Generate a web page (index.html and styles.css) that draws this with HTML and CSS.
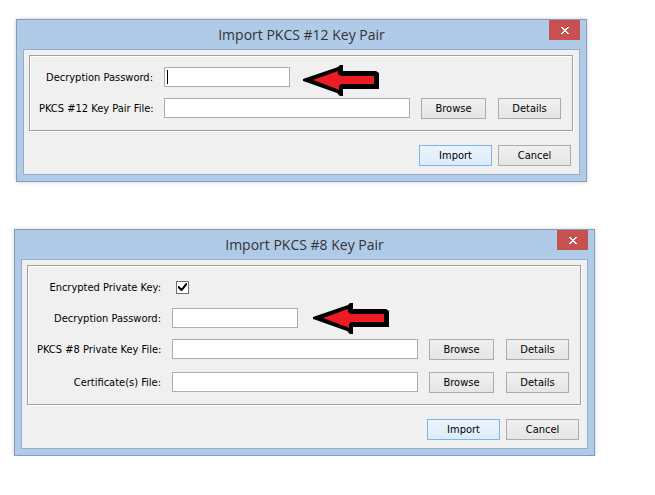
FILE: index.html
```html
<!DOCTYPE html>
<html lang="en">
<head>
<meta charset="utf-8">
<title>Import Key Pair</title>
<link rel="stylesheet" href="styles.css">
</head>
<body>
<svg class="defs" aria-hidden="true">
  <symbol id="arrow" viewBox="0 0 76 31">
    <path class="arrow-line" d="M0 14 L35 2 L37 0 H40 V6 H73 L76 8 V24 H40 V31 H37 L34 28 L3 17 L0 16 Z"/>
    <path class="arrow-fill" d="M10 15 L35 6 V9 L38 11 H71 V19 H38 L36 21 V25 L34 24 Z"/>
  </symbol>
  <symbol id="cross" viewBox="0 0 8 7">
    <path d="M0 0h2v1h1v1h2v-1h1v-1h2v1h-1v1h-1v1h-1v1h1v1h1v1h1v1h-2v-1h-1v-1h-2v1h-1v1h-2v-1h1v-1h1v-1h1v-1h-1v-1h-1v-1h-1z"/>
  </symbol>
</svg>

<form class="dialog dialog-pkcs12">
  <header class="titlebar">
    <h1 class="title">Import PKCS #12 Key Pair</h1>
    <button class="close" type="button" aria-label="Close"><svg class="cross"><use href="#cross"/></svg></button>
  </header>
  <div class="content">
    <div class="panel">
      <div class="row">
        <label class="label" for="p12-password">Decryption Password:</label>
        <div class="field">
          <input class="text password" id="p12-password" type="password">
          <span class="caret"></span>
          <svg class="arrow"><use href="#arrow"/></svg>
        </div>
      </div>
      <div class="row file-row">
        <label class="label" for="p12-file">PKCS #12 Key Pair File:</label>
        <input class="text" id="p12-file" type="text">
        <div class="file-buttons">
          <button class="button browse" type="button">Browse</button>
          <button class="button details" type="button">Details</button>
        </div>
      </div>
    </div>
    <footer class="actions">
      <button class="button action primary" type="button">Import</button>
      <button class="button action" type="button">Cancel</button>
    </footer>
  </div>
</form>

<form class="dialog dialog-pkcs8">
  <header class="titlebar">
    <h1 class="title">Import PKCS #8 Key Pair</h1>
    <button class="close" type="button" aria-label="Close"><svg class="cross"><use href="#cross"/></svg></button>
  </header>
  <div class="content">
    <div class="panel">
      <div class="row">
        <label class="label" for="p8-encrypted">Encrypted Private Key:</label>
        <div class="field"><input class="check" id="p8-encrypted" type="checkbox" checked><svg class="tick" viewBox="0 0 9 9"><path d="M0 3h1l2 2h1l3-4 1-1h1v2L4 8H3L0 5z"/></svg></div>
      </div>
      <div class="row">
        <label class="label" for="p8-password">Decryption Password:</label>
        <div class="field">
          <input class="text password" id="p8-password" type="password">
          <svg class="arrow"><use href="#arrow"/></svg>
        </div>
      </div>
      <div class="row file-row">
        <label class="label" for="p8-file">PKCS #8 Private Key File:</label>
        <input class="text" id="p8-file" type="text">
        <div class="file-buttons">
          <button class="button browse" type="button">Browse</button>
          <button class="button details" type="button">Details</button>
        </div>
      </div>
      <div class="row file-row">
        <label class="label" for="p8-cert">Certificate(s) File:</label>
        <input class="text" id="p8-cert" type="text">
        <div class="file-buttons">
          <button class="button browse" type="button">Browse</button>
          <button class="button details" type="button">Details</button>
        </div>
      </div>
    </div>
    <footer class="actions">
      <button class="button action primary" type="button">Import</button>
      <button class="button action" type="button">Cancel</button>
    </footer>
  </div>
</form>
</body>
</html>
```
FILE: styles.css
```css
* {
  box-sizing: border-box;
}

body {
  margin: 0;
  padding: 19px 60px 0 14px;
  background: #fff;
  color: #000;
  font-family: "DejaVu Sans Condensed", "DejaVu Sans", sans-serif;
  font-size: 11px;
  line-height: 14px;
}

.defs {
  position: absolute;
  width: 0;
  height: 0;
}

.dialog {
  padding: 0 6px 6px;
  border: 1px solid #869db8;
  background: #b0cbe8;
  box-shadow: 0 0 4px rgba(0, 0, 0, 0.2);
}

.dialog-pkcs12 {
  --label-width: 114px;
  --arrow-left: 139px;
  --arrow-top: -2px;
  margin: 0 8px 47px 2px;
}

.dialog-pkcs8 {
  --label-width: 124px;
  --arrow-left: 141px;
  --arrow-top: -5px;
}

.titlebar {
  display: grid;
  grid-template-columns: 31px 1fr 31px;
  height: 29px;
}

.title {
  grid-column: 2;
  margin: 0;
  color: #333;
  font-family: "Open Sans", sans-serif;
  font-size: 14px;
  font-weight: 400;
  line-height: 30px;
  text-align: center;
}

.close {
  display: flex;
  align-items: center;
  justify-content: center;
  height: 20px;
  padding: 0;
  border: 0;
  background: #c75050;
}

.cross {
  width: 8px;
  height: 7px;
  fill: #fff;
}

.content {
  padding: 5px 6px 8px 5px;
  border: 1px solid #93aeca;
  background: #f0f0f0;
}

.panel {
  display: flex;
  flex-direction: column;
  gap: 11px;
  padding: 11px 11px 10px 9px;
  border: 1px solid #a0a0a0;
  box-shadow: 1px 1px 0 #fff, inset 1px 1px 0 #fff;
}

.row {
  display: grid;
  grid-template-columns: var(--label-width) 1fr auto;
  column-gap: 11px;
  height: 20px;
}

.file-row {
  height: 22px;
}

.label {
  height: 20px;
  line-height: 22px;
  text-align: right;
  white-space: nowrap;
}

.field {
  position: relative;
  display: flex;
  align-items: center;
  height: 20px;
}

.text {
  width: 100%;
  min-width: 0;
  height: 20px;
  padding: 0 4px;
  border: 1px solid #abadb3;
  background: #fff;
  font: inherit;
}

.password {
  width: 126px;
}

.caret {
  position: absolute;
  top: 3px;
  left: 3px;
  width: 1px;
  height: 14px;
  background: #000;
}

.arrow {
  position: absolute;
  top: var(--arrow-top);
  left: var(--arrow-left);
  width: 76px;
  height: 31px;
}

.arrow-line {
  fill: #000;
}

.arrow-fill {
  fill: #ed1c24;
}

.check {
  appearance: none;
  width: 13px;
  height: 13px;
  margin: 0 0 0 4px;
  border: 1px solid #707070;
  background: #fff;
}

.tick {
  position: absolute;
  top: 6px;
  left: 6px;
  width: 9px;
  height: 9px;
  pointer-events: none;
}

.file-buttons {
  display: flex;
  gap: 12px;
}

.button {
  height: 21px;
  padding: 0;
  border: 1px solid #acacac;
  background: linear-gradient(#f0f0f0, #e5e5e5);
  color: #000;
  font: inherit;
  text-align: center;
}

.browse {
  width: 65px;
}

.details {
  width: 63px;
}

.actions {
  display: flex;
  justify-content: flex-end;
  gap: 6px;
  margin: 14px 2px 0 0;
}

.action {
  width: 73px;
}

.primary {
  border-color: #7eb4ea;
  background: linear-gradient(#ecf4fc, #dcecfc);
}
```
